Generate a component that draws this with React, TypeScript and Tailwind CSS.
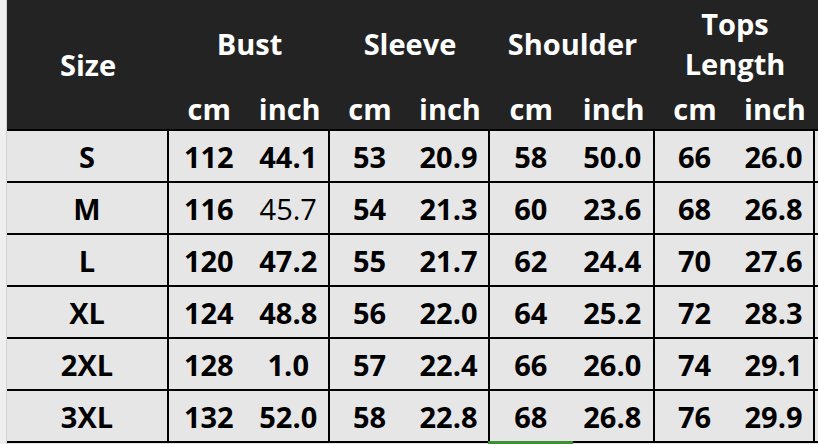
const groups = [
  { title: "Bust", w: "w-[161px]" },
  { title: "Sleeve", w: "w-[160px]" },
  { title: "Shoulder", w: "w-[165px]" },
  { title: "Tops Length", w: "w-[160px]" },
];

const rows: { size: string; vals: string[] }[] = [
  { size: "S", vals: ["112", "44.1", "53", "20.9", "58", "50.0", "66", "26.0"] },
  { size: "M", vals: ["116", "45.7", "54", "21.3", "60", "23.6", "68", "26.8"] },
  { size: "L", vals: ["120", "47.2", "55", "21.7", "62", "24.4", "70", "27.6"] },
  { size: "XL", vals: ["124", "48.8", "56", "22.0", "64", "25.2", "72", "28.3"] },
  { size: "2XL", vals: ["128", "1.0", "57", "22.4", "66", "26.0", "74", "29.1"] },
  { size: "3XL", vals: ["132", "52.0", "58", "22.8", "68", "26.8", "76", "29.9"] },
];

function Cell({ value }: { value: string }) {
  const weight = value === "45.7" ? "font-normal" : "font-bold";
  return (
    <div className={`flex flex-1 items-center justify-center ${weight}`}>
      {value}
    </div>
  );
}

export default function App() {
  return (
    <div className="relative flex h-[444px] w-[818px] overflow-hidden bg-[#e7e6e6] font-['Open_Sans',sans-serif] text-[29px] leading-none">
      <div className="w-[7px] shrink-0 border-r border-[#d2d2d2] bg-[#efefef]" />

      <div className="flex flex-1 flex-col">
        <header className="flex h-[129px] bg-[#232323] font-bold text-white">
          <div className="flex w-[162px] items-center justify-center">Size</div>
          {groups.map((g) => (
            <div key={g.title} className={`flex flex-col ${g.w}`}>
              <div className="flex h-[87px] items-center justify-center px-6 text-center leading-[40px]">
                {g.title}
              </div>
              <div className="flex h-[42px]">
                <div className="flex flex-1 items-center justify-center">cm</div>
                <div className="flex flex-1 items-center justify-center">inch</div>
              </div>
            </div>
          ))}
          <div className="flex-1" />
        </header>

        <div className="h-[2px] bg-black" />

        {rows.map((r) => (
          <div key={r.size} className="flex h-[52px] border-b-2 border-black text-black">
            <div className="flex w-[162px] items-center justify-center border-r-2 border-black font-bold">
              {r.size}
            </div>
            {groups.map((g, i) => (
              <div key={g.title} className={`flex border-r-2 border-black ${g.w}`}>
                <Cell value={r.vals[i * 2]} />
                <Cell value={r.vals[i * 2 + 1]} />
              </div>
            ))}
            <div className="flex-1" />
          </div>
        ))}
      </div>

      <div className="absolute bottom-0 left-[488px] h-[3px] w-[85px] bg-[#3f8f35]" />
    </div>
  );
}
